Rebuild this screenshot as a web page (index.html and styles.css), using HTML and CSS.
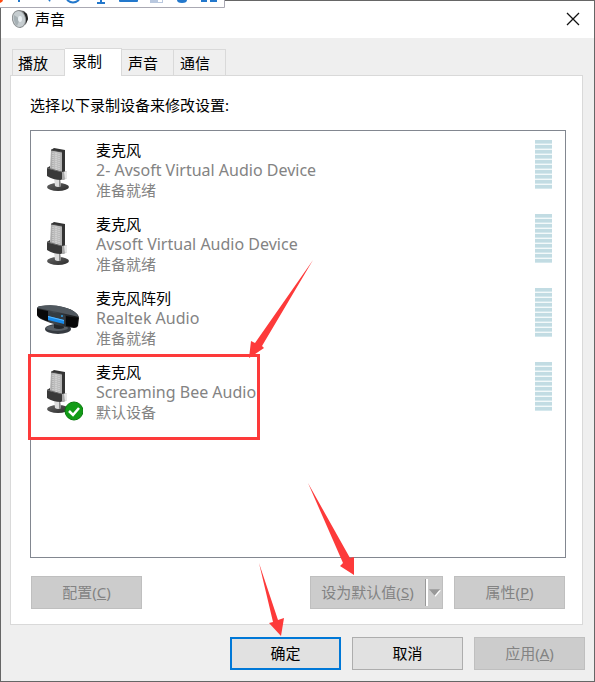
FILE: index.html
```
<!DOCTYPE html>
<html lang="zh-CN">
<head>
<meta charset="utf-8">
<title>声音</title>
<link rel="stylesheet" href="styles.css">
</head>
<body>
<svg class="defs" width="0" height="0" aria-hidden="true">
  <defs>
    <linearGradient id="foot" x2="1" y2="1"><stop stop-color="#666"/><stop offset="1" stop-color="#292929"/></linearGradient>
    <linearGradient id="body" x2="1"><stop stop-color="#a2a2a2"/><stop offset=".5" stop-color="#c5c5c5"/><stop offset="1" stop-color="#b0b0b0"/></linearGradient>
    <linearGradient id="array" x2="1"><stop stop-color="#222"/><stop offset=".4" stop-color="#40474e"/><stop offset="1" stop-color="#111"/></linearGradient>
    <symbol id="mic" viewBox="0 0 48 60">
      <ellipse cx="23" cy="47" rx="11" ry="4" fill="url(#foot)"/>
      <path d="M19 38h6l1 8q-3 2-6 0z" fill="#ddd"/>
      <path d="M24 38h1l1 8-2 1z" fill="#888"/>
      <path d="M16 10l3-2 11 2v22l-3 3-3-1z" fill="#333"/>
      <path d="M16 10l11 2v22l-12-3z" fill="url(#body)"/>
      <path d="M16 10l11 2" stroke="#444"/>
      <path d="M18 13v17M21 13v18M24 14v18" stroke="#ddd" stroke-dasharray="1 1"/>
      <path d="M12 28l3-2v3l12 3 2-1v7l-3 2q-8 0-14-4z" fill="#393939"/>
      <path d="M12 28l15 4" stroke="#666"/>
      <path d="M27 32l5-1v7l-3 2h-2z" fill="#aaa"/>
      <path d="M29 32l3-1v7l-2 1z" fill="#e6e6e6"/>
    </symbol>
  </defs>
</svg>
<main class="window">
  <header class="titlebar">
    <svg class="speaker" viewBox="0 0 18 20" aria-hidden="true">
      <path d="M6 1l6 1 3 3 1 5-2 5-6 4z" fill="#5c5c5c"/>
      <path d="M12 3l3 2 1 5-2 4-2-1z" fill="#222"/>
      <ellipse cx="7" cy="10" rx="7" ry="9" transform="rotate(-12 7 10)" fill="#8e9294"/>
      <ellipse cx="7" cy="10" rx="6" ry="8" transform="rotate(-12 7 10)" fill="#c6cdd0"/>
      <path d="M2 6l6 4-3 7q-4-4-3-11z" fill="#a6b0b4"/>
      <ellipse cx="8" cy="10" rx="2" ry="3" fill="#e9eff2"/>
    </svg>
    <h1>声音</h1>
    <button class="close" aria-label="关闭"><svg viewBox="0 0 14 14"><path d="M1 1l12 12M13 1L1 13" stroke="#111" stroke-width="1.3"/></svg></button>
    <svg class="strip" viewBox="0 0 225 8" aria-hidden="true">
      <path d="M0 0h225v8H0z" fill="#fff"/>
      <path d="M0 7.500h224.500V0" fill="none" stroke="#aaa9b3"/>
      <path d="M0 0h3q0 2-3 3z" fill="#ff4b12"/>
      <g fill="none" stroke="#2378cc" stroke-width="2">
        <path d="M19 0v2M50 0l-1 1M67 0q6 5 12 0M101 0v3M97 3h8"/>
      </g>
      <g fill="#2378cc"><path d="M119 0h19v1q0 1-1 1h-17q-1 0-1-1zM177 0h10q0 3-5 3t-5-3zM201 0h6v2h-6zM210 0h7v2h-7z"/></g>
      <path d="M150 0h13v3h-13z" fill="#b9c8df"/><path d="M158 0h4v2h-4z" fill="#fff"/>
    </svg>
  </header>
  <div class="content">
    <div class="tabs" role="tablist">
      <button class="tab" role="tab">播放</button>
      <button class="tab selected" role="tab" aria-selected="true">录制</button>
      <button class="tab" role="tab">声音</button>
      <button class="tab" role="tab">通信</button>
    </div>
    <section class="panel">
      <p class="prompt">选择以下录制设备来修改设置:</p>
      <ul class="devices">
        <li class="device">
          <svg class="icon" viewBox="0 0 48 60" aria-hidden="true"><use href="#mic"/></svg>
          <div class="text"><strong>麦克风</strong><span class="model">2- Avsoft Virtual Audio Device</span><span>准备就绪</span></div>
          <div class="meter"></div>
        </li>
        <li class="device">
          <svg class="icon" viewBox="0 0 48 60" aria-hidden="true"><use href="#mic"/></svg>
          <div class="text"><strong>麦克风</strong><span class="model">Avsoft Virtual Audio Device</span><span>准备就绪</span></div>
          <div class="meter"></div>
        </li>
        <li class="device">
          <svg class="icon" viewBox="0 0 48 60" aria-hidden="true">
            <ellipse cx="23" cy="41" rx="13" ry="5" fill="#353a40"/>
            <ellipse cx="22" cy="40" rx="11" ry="3" fill="#596067"/>
            <path d="M19 35h9l1 5q-5 2-10 0z" fill="#24282c"/>
            <path d="M2 20q1-2 4-2 12-2 22 1 9 2 13 6 3 2 3 5l-1 8q-1 2-4 2-18-2-31-8-5-2-6-5z" fill="url(#array)"/>
            <path d="M2 21l11 2v10q-8-2-11-6z" fill="#080808"/>
            <path d="M31 28l12 2-1 8q-1 2-4 1l-7-1z" fill="#080808"/>
            <path d="M2 20q1-2 4-2 12-2 22 1 9 2 13 6l3 4q-20-5-42-9z" fill="#50585f"/>
            <path d="M14 24l16 3v9l-17-4z" fill="#343b41"/>
            <path d="M13 28l16 4v4l-16-4z" fill="#198bea"/>
            <path d="M13 28l16 4v1l-16-4z" fill="#58b8ff"/><circle cx="27" cy="28" r="1" fill="#2b9fe4"/>
          </svg>
          <div class="text"><strong>麦克风阵列</strong><span class="model">Realtek Audio</span><span>准备就绪</span></div>
          <div class="meter"></div>
        </li>
        <li class="device">
          <svg class="icon" viewBox="0 0 48 60" aria-hidden="true"><use href="#mic"/>
            <circle cx="39" cy="49" r="9" fill="#129b17" stroke="#087b0c"/>
            <path d="M34 49l4 4 6-7" fill="none" stroke="#fff" stroke-width="2.500"/>
          </svg>
          <div class="text"><strong>麦克风</strong><span class="model">Screaming Bee Audio</span><span>默认设备</span></div>
          <div class="meter"></div>
        </li>
      </ul>
      <div class="actions">
        <button class="btn" disabled>配置(<u>C</u>)</button>
        <div class="split">
          <button class="btn main" disabled>设为默认值(<u>S</u>)</button>
          <button class="btn drop" disabled aria-label="更多"><svg viewBox="0 0 14 8"><path d="M2 1h12L8 8z" fill="#fff"/><path d="M1 0h12L7 7z" fill="#999"/></svg></button>
        </div>
        <button class="btn" disabled>属性(<u>P</u>)</button>
      </div>
    </section>
    <footer class="footer">
      <button class="btn default">确定</button>
      <button class="btn">取消</button>
      <button class="btn" disabled>应用(<u>A</u>)</button>
    </footer>
  </div>
  <svg class="marks" viewBox="0 0 595 682" aria-hidden="true">
    <path d="M29.500 355.500h229v83h-229z" fill="none" stroke="#fd3a3a" stroke-width="3"/>
    <g fill="#fd3a3a">
      <path d="M313 260L262 346l2 2-15 10 2-17 4 2z"/>
      <path d="M308 483l42 75 4-1v18l-14-9 3-3z"/>
      <path d="M259 563l19 57 6-2-3 18-12-13 4-1z"/>
    </g>
  </svg>
</main>
</body>
</html>
```
FILE: styles.css
```
* { box-sizing: border-box; }
body {
  margin: 0;
  font: 15px/20px "Noto Sans", "Noto Sans CJK SC", sans-serif;
  color: #000;
}
.defs { position: absolute; }
.window {
  position: relative;
  min-height: 100vh;
  background: #efefef;
  border: 1px solid #666;
}
.titlebar {
  height: 37px;
  display: flex;
  align-items: center;
  gap: 5px;
  padding: 0 14px 2px 11px;
  background: #fff;
}
.speaker { width: 18px; height: 20px; }
h1 { margin: 0; flex: 1; font-size: 15px; font-weight: 400; }
.close { width: 14px; height: 14px; padding: 0; border: 0; background: none; }
.close svg { display: block; }
.strip { position: absolute; top: -1px; left: -1px; width: 225px; height: 8px; }
.content { padding: 10px 11px 11px 9px; }
.tabs { display: flex; align-items: flex-end; padding-left: 2px; }
.tab {
  width: 52px;
  height: 26px;
  padding: 0 0 0 6px;
  border: 1px solid #d9d9d9;
  border-width: 1px 1px 0 0;
  background: #efefef;
  font: inherit;
  color: inherit;
  white-space: nowrap;
  text-align: left;
}
.tab:first-child { width: 53px; padding-left: 5px; border-left-width: 1px; }
.tab.selected {
  width: 57px;
  height: 28px;
  margin-bottom: -1px;
  padding: 0 0 3px 7px;
  position: relative;
  background: #fff;
}
.panel { padding: 19px 16px 15px 19px; background: #fff; border: 1px solid #d9d9d9; }
.prompt { margin: 0 0 15px; }
.devices {
  height: 428px;
  margin: 0;
  padding: 9px 13px 9px 4px;
  list-style: none;
  border: 1px solid #828790;
  display: grid;
  grid-auto-rows: 74px;
}
.device { display: flex; gap: 13px; }
.icon { flex: none; width: 48px; height: 60px; }
.text { flex: 1; display: flex; flex-direction: column; color: #838383; }
.text strong { font-weight: 400; color: #000; }
.model { font-size: 16px; }
.meter {
  width: 17px;
  height: 49px;
  background: repeating-linear-gradient(#c2dce3 0 3px, #d5e8ed 3px 4px, #f3f9fa 4px 5px);
}
.actions { display: flex; gap: 11px; margin: 18px 1px 0; }
.btn {
  width: 111px;
  height: 33px;
  padding: 0 0 2px;
  border: 1px solid #adadad;
  background: #e1e1e1;
  color: #000;
  font: inherit;
}
.btn:disabled { background: #ccc; border-color: #bfbfbf; color: #838383; }
.btn.default { border: 2px solid #0078d7; }
.split { display: flex; width: 133px; margin-left: auto; }
.btn.main { flex: 1; border-right: 0; }
.btn.drop { width: 19px; padding: 0; border-left: 0; display: flex; align-items: center; justify-content: center; }
.drop svg { width: 13px; height: 8px; }
.drop::before { content: ""; width: 2px; height: 27px; background: #fff; border-left: 1px solid #999; }
.footer { display: flex; justify-content: flex-end; gap: 11px; padding-top: 12px; margin-right: -2px; }
.marks { position: absolute; top: -1px; left: -1px; width: 595px; height: 682px; pointer-events: none; }
```
